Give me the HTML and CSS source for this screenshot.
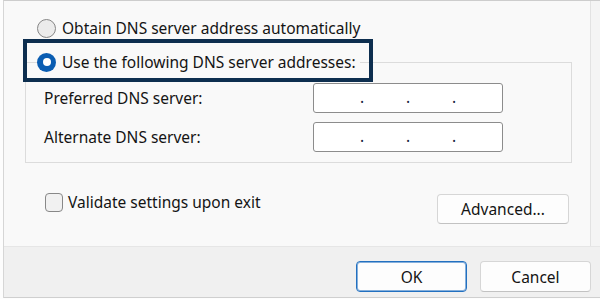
FILE: index.html
```html
<!DOCTYPE html>
<html lang="en">
<head>
<meta charset="utf-8">
<title>DNS settings</title>
<link rel="stylesheet" href="styles.css">
</head>
<body>
<div class="dialog">
  <div class="content">
    <div class="panel">
      <label class="option">
        <span class="radio"></span>
        <span>Obtain DNS server address automatically</span>
      </label>
      <fieldset class="group">
        <legend class="legend">
          <span class="radio checked"></span>
          <span>Use the following DNS server addresses:</span>
        </legend>
        <div class="fields">
          <span class="label">Preferred DNS server:</span>
          <div class="ip"><span>.</span><span>.</span><span>.</span></div>
          <span class="label">Alternate DNS server:</span>
          <div class="ip"><span>.</span><span>.</span><span>.</span></div>
        </div>
      </fieldset>
      <div class="bottom-row">
        <label class="check-row">
          <span class="checkbox"></span>
          <span>Validate settings upon exit</span>
        </label>
        <button class="btn advanced">Advanced...</button>
      </div>
    </div>
    <div class="side"></div>
  </div>
  <div class="footer">
    <button class="btn default">OK</button>
    <button class="btn">Cancel</button>
  </div>
</div>
</body>
</html>
```

FILE: styles.css
```css
* { box-sizing: border-box; }

html, body {
  margin: 0;
  padding: 0;
}

body {
  width: 600px;
  height: 299px;
  overflow: hidden;
  background: #fdfdfd;
  font-family: "Noto Sans", "Open Sans", sans-serif;
  font-size: 15.5px;
  line-height: 20px;
  color: #141414;
}

.dialog {
  margin-left: 3px;
  height: 298px;
  display: flex;
  flex-direction: column;
  border-top: 1px solid #cdcdcd;
  border-left: 1px solid #d6d6d6;
}

.content {
  height: 245px;
  display: flex;
}

.panel {
  width: 586px;
  background: #f9f9f9;
  padding-top: 17px;
}

.side {
  flex: 1;
  background: #f4f4f4;
  border-left: 1px solid #e2e2e2;
}

.option {
  display: flex;
  align-items: center;
  gap: 6px;
  margin-left: 33px;
}

.radio {
  width: 19px;
  height: 19px;
  flex: none;
  border-radius: 50%;
  border: 1.5px solid #868686;
  background: #ebebeb;
}

.radio.checked {
  border: none;
  background: #0a5db2;
  display: flex;
  align-items: center;
  justify-content: center;
}

.radio.checked::before {
  content: "";
  width: 8px;
  height: 8px;
  border-radius: 50%;
  background: #ffffff;
}

.group {
  margin: 14px 18px 0 21px;
  padding: 0;
  border: 1px solid #dcdcdc;
  min-inline-size: 0;
}

.legend {
  position: relative;
  display: flex;
  align-items: center;
  gap: 6px;
  margin-left: 11px;
  padding: 0 4px 0 0;
  line-height: 20px;
}

.legend::after {
  content: "";
  position: absolute;
  left: -14px;
  right: -13px;
  top: -13px;
  bottom: -10px;
  border: 4px solid #0d2e4f;
  pointer-events: none;
}

.fields {
  display: grid;
  grid-template-columns: 1fr 190px;
  row-gap: 9px;
  align-items: center;
  padding: 11px 68px 10px 18px;
}

.ip {
  height: 30px;
  border: 1px solid #8c8c8c;
  border-radius: 3px;
  background: #ffffff;
  display: flex;
  align-items: center;
  padding: 0 0 2px 46px;
  color: #1a2540;
}

.ip span {
  width: 46px;
  flex: none;
}

.bottom-row {
  margin-top: 29px;
  display: flex;
  justify-content: space-between;
  align-items: flex-start;
  padding: 0 21px 0 41px;
}

.check-row {
  display: flex;
  align-items: center;
  gap: 5px;
}

.checkbox {
  width: 18px;
  height: 19px;
  border: 1.5px solid #888888;
  border-radius: 4px;
  background: #f1f1f1;
}

.btn {
  font: inherit;
  color: #141414;
  background: #fdfdfd;
  border: 1px solid #d6d6d6;
  border-bottom-color: #c2c2c2;
  border-radius: 4px;
  padding: 0;
  width: 111px;
  height: 31px;
  line-height: 20px;
}

.btn.advanced {
  width: 132px;
  height: 30px;
  margin-top: 2px;
}

.btn.default {
  border: 1px solid #2270c0;
  box-shadow: inset 0 0 0 1px rgba(34, 112, 192, 0.55);
}

.footer {
  flex: 1;
  background: #f0f0f0;
  border-top: 1px solid #e6e6e6;
  border-bottom: 1px solid #cfcfcf;
  display: flex;
  justify-content: flex-end;
  align-items: flex-start;
  gap: 13px;
  padding: 14px 9px 0 0;
}
```
